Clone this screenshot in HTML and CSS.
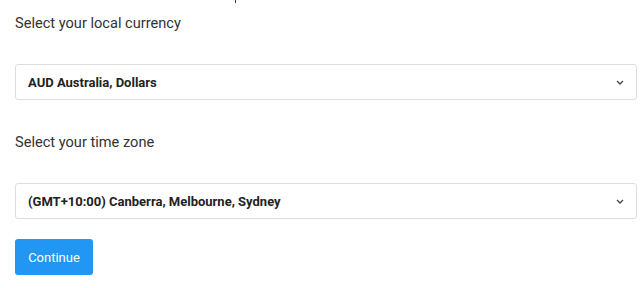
FILE: index.html
```html
<!DOCTYPE html>
<html lang="en">
<head>
    <meta charset="UTF-8">
    <meta name="viewport" content="width=device-width, initial-scale=1.0">
    <title>Settings</title>
    <link rel="stylesheet" href="styles.css">
</head>
<body>
    <span class="top-mark"></span>
    <form class="settings">
        <div class="field">
            <label class="field-label">Select your local currency</label>
            <div class="select">
                <span>AUD Australia, Dollars</span>
                <svg class="chevron" width="8" height="5" viewBox="0 0 8 5"><path d="M1 1l3 3 3-3" fill="none" stroke="#444" stroke-width="1.3"/></svg>
            </div>
        </div>
        <div class="field">
            <label class="field-label">Select your time zone</label>
            <div class="select">
                <span>(GMT+10:00) Canberra, Melbourne, Sydney</span>
                <svg class="chevron" width="8" height="5" viewBox="0 0 8 5"><path d="M1 1l3 3 3-3" fill="none" stroke="#444" stroke-width="1.3"/></svg>
            </div>
        </div>
        <button type="button" class="continue-btn">Continue</button>
    </form>
</body>
</html>
```

FILE: styles.css
```css
body {
    margin: 0;
    padding: 0 6px 0 15px;
    background: #fff;
    font-family: 'Roboto', sans-serif;
    color: #333;
    position: relative;
}
.top-mark {
    position: absolute;
    left: 235px;
    top: 0;
    width: 1px;
    height: 3px;
    background: #2a2aff;
}
.settings {
    display: flex;
    flex-direction: column;
    align-items: flex-start;
}
.field {
    width: 100%;
    padding-top: 13px;
}
.field + .field {
    padding-top: 32px;
}
.field-label {
    display: block;
    font-size: 14.6px;
    line-height: 20px;
    margin-bottom: 31px;
}
.select {
    height: 36px;
    box-sizing: border-box;
    border: 1px solid #ddd;
    border-radius: 3px;
    display: flex;
    align-items: center;
    justify-content: space-between;
    padding: 0 12px 0 12px;
    font-size: 13px;
    font-weight: bold;
    color: #222;
}
.chevron {
    display: block;
}
.continue-btn {
    margin-top: 20px;
    width: 78px;
    height: 36px;
    background: #2196f3;
    color: #fff;
    border: none;
    border-radius: 3px;
    font-family: 'Roboto', sans-serif;
    font-size: 13px;
    cursor: pointer;
}
```
